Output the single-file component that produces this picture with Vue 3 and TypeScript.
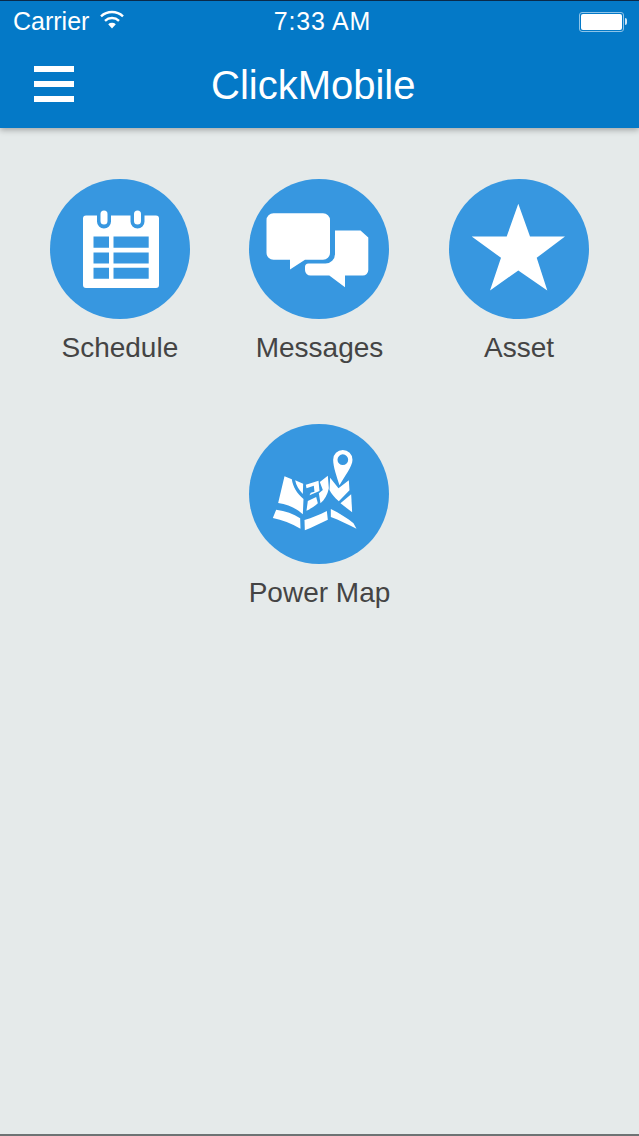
<script setup lang="ts">
interface Tile {
  label: string;
  icon: 'schedule' | 'messages' | 'asset' | 'map';
}

const tiles: Tile[] = [
  { label: 'Schedule', icon: 'schedule' },
  { label: 'Messages', icon: 'messages' },
  { label: 'Asset', icon: 'asset' },
  { label: 'Power Map', icon: 'map' },
];
</script>

<template>
  <div class="screen">
    <header class="topbar">
      <div class="status">
        <div class="status-left">
          <span>Carrier</span>
          <svg class="wifi" width="26" height="20" viewBox="0 0 26 20">
            <path d="M13 18.500 9.200 14.300a5.600 5.600 0 0 1 7.600 0Z" fill="#fff" />
            <path d="M6 10.800a10.300 10.300 0 0 1 14 0" fill="none" stroke="#fff" stroke-width="2.400" />
            <path d="M2 6.300a16.200 16.200 0 0 1 22 0" fill="none" stroke="#fff" stroke-width="2.400" />
          </svg>
        </div>
        <span class="clock">7:33 AM</span>
        <div class="battery">
          <span class="battery-body"><span class="battery-fill"></span></span>
          <span class="battery-tip"></span>
        </div>
      </div>
      <div class="navbar">
        <div class="burger"><span></span><span></span><span></span></div>
        <h1 class="title">ClickMobile</h1>
      </div>
    </header>

    <main class="grid">
      <div v-for="tile in tiles" :key="tile.label" class="tile">
        <div class="circle">
          <svg v-if="tile.icon === 'schedule'" width="140" height="140" viewBox="0 0 140 140">
            <path
              fill="#fff"
              fill-rule="evenodd"
              d="M36 36.500h11v6a7 7 0 0 0 14 0v-6h19.500v6a7 7 0 0 0 14 0v-6H106a3 3 0 0 1 3 3V106a3 3 0 0 1-3 3H36a3 3 0 0 1-3-3V39.500a3 3 0 0 1 3-3ZM43.500 57.500v11.300H59V57.500ZM63.500 57.500v11.300h35.200V57.500ZM43.500 73.500v11H59v-11ZM63.500 73.500v11h35.200v-11ZM43.500 88.800v11H59v-11ZM63.500 88.800v11h35.200v-11Z"
            />
            <rect x="50.500" y="31.500" width="7" height="14" rx="3.500" fill="#fff" />
            <rect x="84" y="31.500" width="7" height="14" rx="3.500" fill="#fff" />
          </svg>

          <svg v-else-if="tile.icon === 'messages'" width="140" height="140" viewBox="0 0 140 140">
            <path
              fill="#fff"
              d="M24.500 34.200H74a7 7 0 0 1 7 7v32.600a7 7 0 0 1-7 7H56l-15 9.700v-9.700H24.500a7 7 0 0 1-7-7V41.200a7 7 0 0 1 7-7Z"
            />
            <path
              fill="#fff"
              d="M86 51.500h25.500l7.800 7V91a5.500 5.500 0 0 1-5.500 5.500H96v11.700L80.300 96.500H61.500A5.500 5.500 0 0 1 56 91v-3a3.500 3.500 0 0 1 3.500-3.500h17A9.500 9.500 0 0 0 86 75Z"
            />
          </svg>

          <svg v-else-if="tile.icon === 'asset'" width="140" height="140" viewBox="0 0 140 140">
            <polygon
              fill="#fff"
              points="69.300,24.800 81,57.500 116,57.500 87.700,78.800 98.300,111.500 69.300,91.500 41,111.500 52,78.800 22.700,57.500 57.700,57.500"
            />
          </svg>

          <svg v-else width="140" height="140" viewBox="0 0 140 140">
            <!-- traced in the 3x crop's coordinates, hence the scale -->
            <g transform="translate(10.500 11) scale(.3333)" fill="#fff">
              <path
                fill-rule="evenodd"
                d="M250 45a29 29 0 0 1 29 29c0 20-24 50-39 77-8-27-19-55-19-77a29 29 0 0 1 29-29Zm0 13a16 16 0 1 0 0 32 16 16 0 0 0 0-32Z"
              />
              <path d="M75 124 97 133C100 155 112 175 132 192L130 238C108 218 85 208 56 204Z" />
              <path d="M107 136 131 146 130 177C118 165 110 152 107 136Z" />
              <path d="M139 149 177 137 180 168 150 181 154 173 165 170 163 152 141 160Z" />
              <path d="M141 227 145 198 170 186 175 205C165 215 153 222 141 227Z" />
              <path d="M181 141 205 122 208 160C204 180 195 195 183 205L178 175 190 165Z" />
              <path d="M212 128 237 160 268 136 270 166 238 199C225 188 215 175 210 165Z" />
              <path d="M243 205 275 178 278 232Z" />
              <path d="M50 224C78 228 102 236 122 250L123 281C95 265 68 255 40 249Z" />
              <path d="M135 255C158 248 180 240 202 228L205 254C182 265 158 277 136 286Z" />
              <path d="M214 222C240 235 265 250 282 265L291 281C265 268 240 256 214 246Z" />
            </g>
          </svg>
        </div>
        <span class="label">{{ tile.label }}</span>
      </div>
    </main>
  </div>
</template>

<style>
html,
body {
  margin: 0;
  background: #e5eaea;
}
</style>

<style scoped>
.screen {
  width: 639px;
  height: 1136px;
  box-sizing: border-box;
  background: #e5eaea;
  border-bottom: 2px solid #6d7374;
  overflow: hidden;
  font-family: "Liberation Sans", Arial, sans-serif;
}

.topbar {
  height: 128px;
  box-sizing: border-box;
  padding-top: 2px;
  background: #0479c7;
  border-top: 1px solid #0a2a4a;
  box-shadow: 0 2px 6px rgba(0, 0, 0, 0.3);
  color: #fff;
}

.status {
  height: 37px;
  display: grid;
  grid-template-columns: 1fr auto 1fr;
  align-items: center;
  padding: 0 13px;
  font-size: 25px;
}

.status-left {
  display: flex;
  align-items: center;
  gap: 10px;
}

.wifi {
  margin-top: -4px;
}

.clock {
  margin-left: 6px;
  letter-spacing: 0.8px;
}

.battery {
  justify-self: end;
  display: flex;
  align-items: center;
  margin-right: -1px;
}

.battery-body {
  width: 45px;
  height: 20px;
  box-sizing: border-box;
  padding: 1px;
  border: 1px solid #8fc4e8;
  border-radius: 3px;
  display: block;
}

.battery-fill {
  display: block;
  height: 100%;
  background: #fff;
  border-radius: 2px;
}

.battery-tip {
  margin-left: 1px;
  width: 2px;
  height: 7px;
  background: #cfe5f5;
  border-radius: 0 2px 2px 0;
}

.navbar {
  display: flex;
  align-items: center;
  padding-left: 34px;
  height: 88px;
}

.burger {
  width: 40px;
  display: flex;
  flex-direction: column;
  gap: 9px;
}

.burger span {
  display: block;
  height: 6px;
  background: #fff;
}

.title {
  margin: 2px 0 0 137px;
  font-size: 40px;
  font-weight: 400;
}

.grid {
  display: flex;
  flex-wrap: wrap;
  justify-content: center;
  row-gap: 60px;
  padding: 51px 20px 0;
}

.tile {
  width: 33.33%;
  display: flex;
  flex-direction: column;
  align-items: center;
}

.circle {
  width: 140px;
  height: 140px;
  border-radius: 50%;
  background: #3797e0;
  display: flex;
}

.label {
  margin-top: 13px;
  font-size: 28px;
  line-height: 32px;
  color: #444;
}
</style>
